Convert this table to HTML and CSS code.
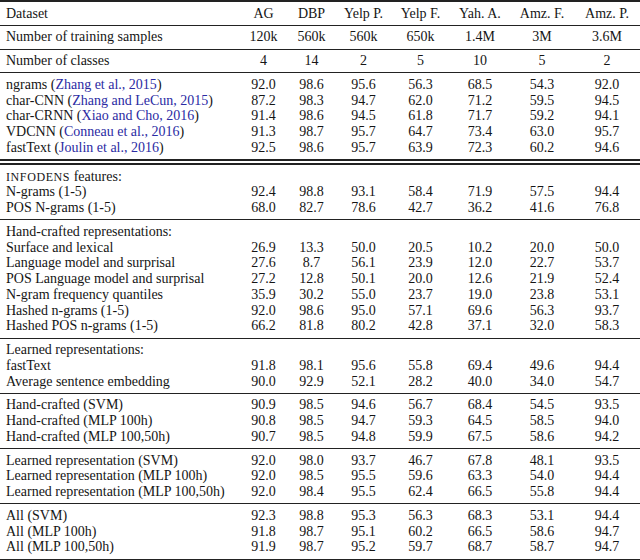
FILE: index.html
```html
<!DOCTYPE html>
<html lang="en">
<head>
<meta charset="utf-8">
<title>Results</title>
<link rel="stylesheet" href="styles.css">
</head>
<body>
<table class="results">
  <colgroup>
    <col class="c-label"><col class="c-ag"><col class="c-dbp"><col class="c-yp"><col class="c-yf"><col class="c-ya"><col class="c-af"><col class="c-ap">
  </colgroup>
  <thead>
    <tr><th class="label">Dataset</th><th>AG</th><th>DBP</th><th>Yelp P.</th><th>Yelp F.</th><th>Yah. A.</th><th>Amz. F.</th><th>Amz. P.</th></tr>
  </thead>
  <tbody class="group">
    <tr><td class="label">Number of training samples</td><td>120k</td><td>560k</td><td>560k</td><td>650k</td><td>1.4M</td><td>3M</td><td>3.6M</td></tr>
  </tbody>
  <tbody class="group">
    <tr><td class="label">Number of classes</td><td>4</td><td>14</td><td>2</td><td>5</td><td>10</td><td>5</td><td>2</td></tr>
  </tbody>
  <tbody class="group">
    <tr><td class="label">ngrams (<span class="cite">Zhang et al., 2015</span>)</td><td>92.0</td><td>98.6</td><td>95.6</td><td>56.3</td><td>68.5</td><td>54.3</td><td>92.0</td></tr>
    <tr><td class="label">char-CNN (<span class="cite">Zhang and LeCun, 2015</span>)</td><td>87.2</td><td>98.3</td><td>94.7</td><td>62.0</td><td>71.2</td><td>59.5</td><td>94.5</td></tr>
    <tr><td class="label">char-CRNN (<span class="cite">Xiao and Cho, 2016</span>)</td><td>91.4</td><td>98.6</td><td>94.5</td><td>61.8</td><td>71.7</td><td>59.2</td><td>94.1</td></tr>
    <tr><td class="label">VDCNN (<span class="cite">Conneau et al., 2016</span>)</td><td>91.3</td><td>98.7</td><td>95.7</td><td>64.7</td><td>73.4</td><td>63.0</td><td>95.7</td></tr>
    <tr><td class="label">fastText (<span class="cite">Joulin et al., 2016</span>)</td><td>92.5</td><td>98.6</td><td>95.7</td><td>63.9</td><td>72.3</td><td>60.2</td><td>94.6</td></tr>
  </tbody>
  <tbody class="group double">
    <tr><td class="label" colspan="8"><span class="sc">INFODENS</span> features:</td></tr>
    <tr><td class="label">N-grams (1-5)</td><td>92.4</td><td>98.8</td><td>93.1</td><td>58.4</td><td>71.9</td><td>57.5</td><td>94.4</td></tr>
    <tr><td class="label">POS N-grams (1-5)</td><td>68.0</td><td>82.7</td><td>78.6</td><td>42.7</td><td>36.2</td><td>41.6</td><td>76.8</td></tr>
  </tbody>
  <tbody class="group">
    <tr><td class="label" colspan="8">Hand-crafted representations:</td></tr>
    <tr><td class="label">Surface and lexical</td><td>26.9</td><td>13.3</td><td>50.0</td><td>20.5</td><td>10.2</td><td>20.0</td><td>50.0</td></tr>
    <tr><td class="label">Language model and surprisal</td><td>27.6</td><td>8.7</td><td>56.1</td><td>23.9</td><td>12.0</td><td>22.7</td><td>53.7</td></tr>
    <tr><td class="label">POS Language model and surprisal</td><td>27.2</td><td>12.8</td><td>50.1</td><td>20.0</td><td>12.6</td><td>21.9</td><td>52.4</td></tr>
    <tr><td class="label">N-gram frequency quantiles</td><td>35.9</td><td>30.2</td><td>55.0</td><td>23.7</td><td>19.0</td><td>23.8</td><td>53.1</td></tr>
    <tr><td class="label">Hashed n-grams (1-5)</td><td>92.0</td><td>98.6</td><td>95.0</td><td>57.1</td><td>69.6</td><td>56.3</td><td>93.7</td></tr>
    <tr><td class="label">Hashed POS n-grams (1-5)</td><td>66.2</td><td>81.8</td><td>80.2</td><td>42.8</td><td>37.1</td><td>32.0</td><td>58.3</td></tr>
  </tbody>
  <tbody class="group">
    <tr><td class="label" colspan="8">Learned representations:</td></tr>
    <tr><td class="label">fastText</td><td>91.8</td><td>98.1</td><td>95.6</td><td>55.8</td><td>69.4</td><td>49.6</td><td>94.4</td></tr>
    <tr><td class="label">Average sentence embedding</td><td>90.0</td><td>92.9</td><td>52.1</td><td>28.2</td><td>40.0</td><td>34.0</td><td>54.7</td></tr>
  </tbody>
  <tbody class="group">
    <tr><td class="label">Hand-crafted (SVM)</td><td>90.9</td><td>98.5</td><td>94.6</td><td>56.7</td><td>68.4</td><td>54.5</td><td>93.5</td></tr>
    <tr><td class="label">Hand-crafted (MLP 100h)</td><td>90.8</td><td>98.5</td><td>94.7</td><td>59.3</td><td>64.5</td><td>58.5</td><td>94.0</td></tr>
    <tr><td class="label">Hand-crafted (MLP 100,50h)</td><td>90.7</td><td>98.5</td><td>94.8</td><td>59.9</td><td>67.5</td><td>58.6</td><td>94.2</td></tr>
  </tbody>
  <tbody class="group">
    <tr><td class="label">Learned representation (SVM)</td><td>92.0</td><td>98.0</td><td>93.7</td><td>46.7</td><td>67.8</td><td>48.1</td><td>93.5</td></tr>
    <tr><td class="label">Learned representation (MLP 100h)</td><td>92.0</td><td>98.5</td><td>95.5</td><td>59.6</td><td>63.3</td><td>54.0</td><td>94.4</td></tr>
    <tr><td class="label">Learned representation (MLP 100,50h)</td><td>92.0</td><td>98.4</td><td>95.5</td><td>62.4</td><td>66.5</td><td>55.8</td><td>94.4</td></tr>
  </tbody>
  <tbody class="group last">
    <tr><td class="label">All (SVM)</td><td>92.3</td><td>98.8</td><td>95.3</td><td>56.3</td><td>68.3</td><td>53.1</td><td>94.4</td></tr>
    <tr><td class="label">All (MLP 100h)</td><td>91.8</td><td>98.7</td><td>95.1</td><td>60.2</td><td>66.5</td><td>58.6</td><td>94.7</td></tr>
    <tr><td class="label">All (MLP 100,50h)</td><td>91.9</td><td>98.7</td><td>95.2</td><td>59.7</td><td>68.7</td><td>58.7</td><td>94.7</td></tr>
  </tbody>
</table>
</body>
</html>
```
FILE: styles.css
```css
html, body {
  margin: 0;
  padding: 0;
  background: #ffffff;
}

.results {
  width: 640px;
  table-layout: fixed;
  border-collapse: collapse;
  font-family: "Liberation Serif", "Times New Roman", serif;
  font-size: 14px;
  line-height: 15.75px;
  color: #151515;
  border-top: 2px solid #222;
  border-bottom: 2px solid #222;
}

.c-label { width: 240px; }
.c-ag { width: 47px; }
.c-dbp { width: 49px; }
.c-yp { width: 55px; }
.c-yf { width: 59px; }
.c-ya { width: 60px; }
.c-af { width: 64px; }
.c-ap { width: 66px; }

.results th,
.results td {
  padding: 0;
  text-align: center;
  font-weight: normal;
  white-space: nowrap;
}

.results .label {
  text-align: left;
  padding-left: 6px;
}

.results thead th {
  padding-top: 3.5px;
  padding-bottom: 3.5px;
  border-bottom: 1px solid #222;
}

.group {
  border-bottom: 1px solid #222;
}

.group tr:first-child td {
  padding-top: 3.5px;
}

.group tr:last-child td {
  padding-bottom: 3.5px;
}

.group.double {
  border-top: 6px double #222;
}

.group.last {
  border-bottom: 2px solid #222;
}

.cite {
  color: #2b2ba3;
}

.sc {
  font-size: 12px;
  line-height: 1;
  letter-spacing: 0.6px;
}
```
